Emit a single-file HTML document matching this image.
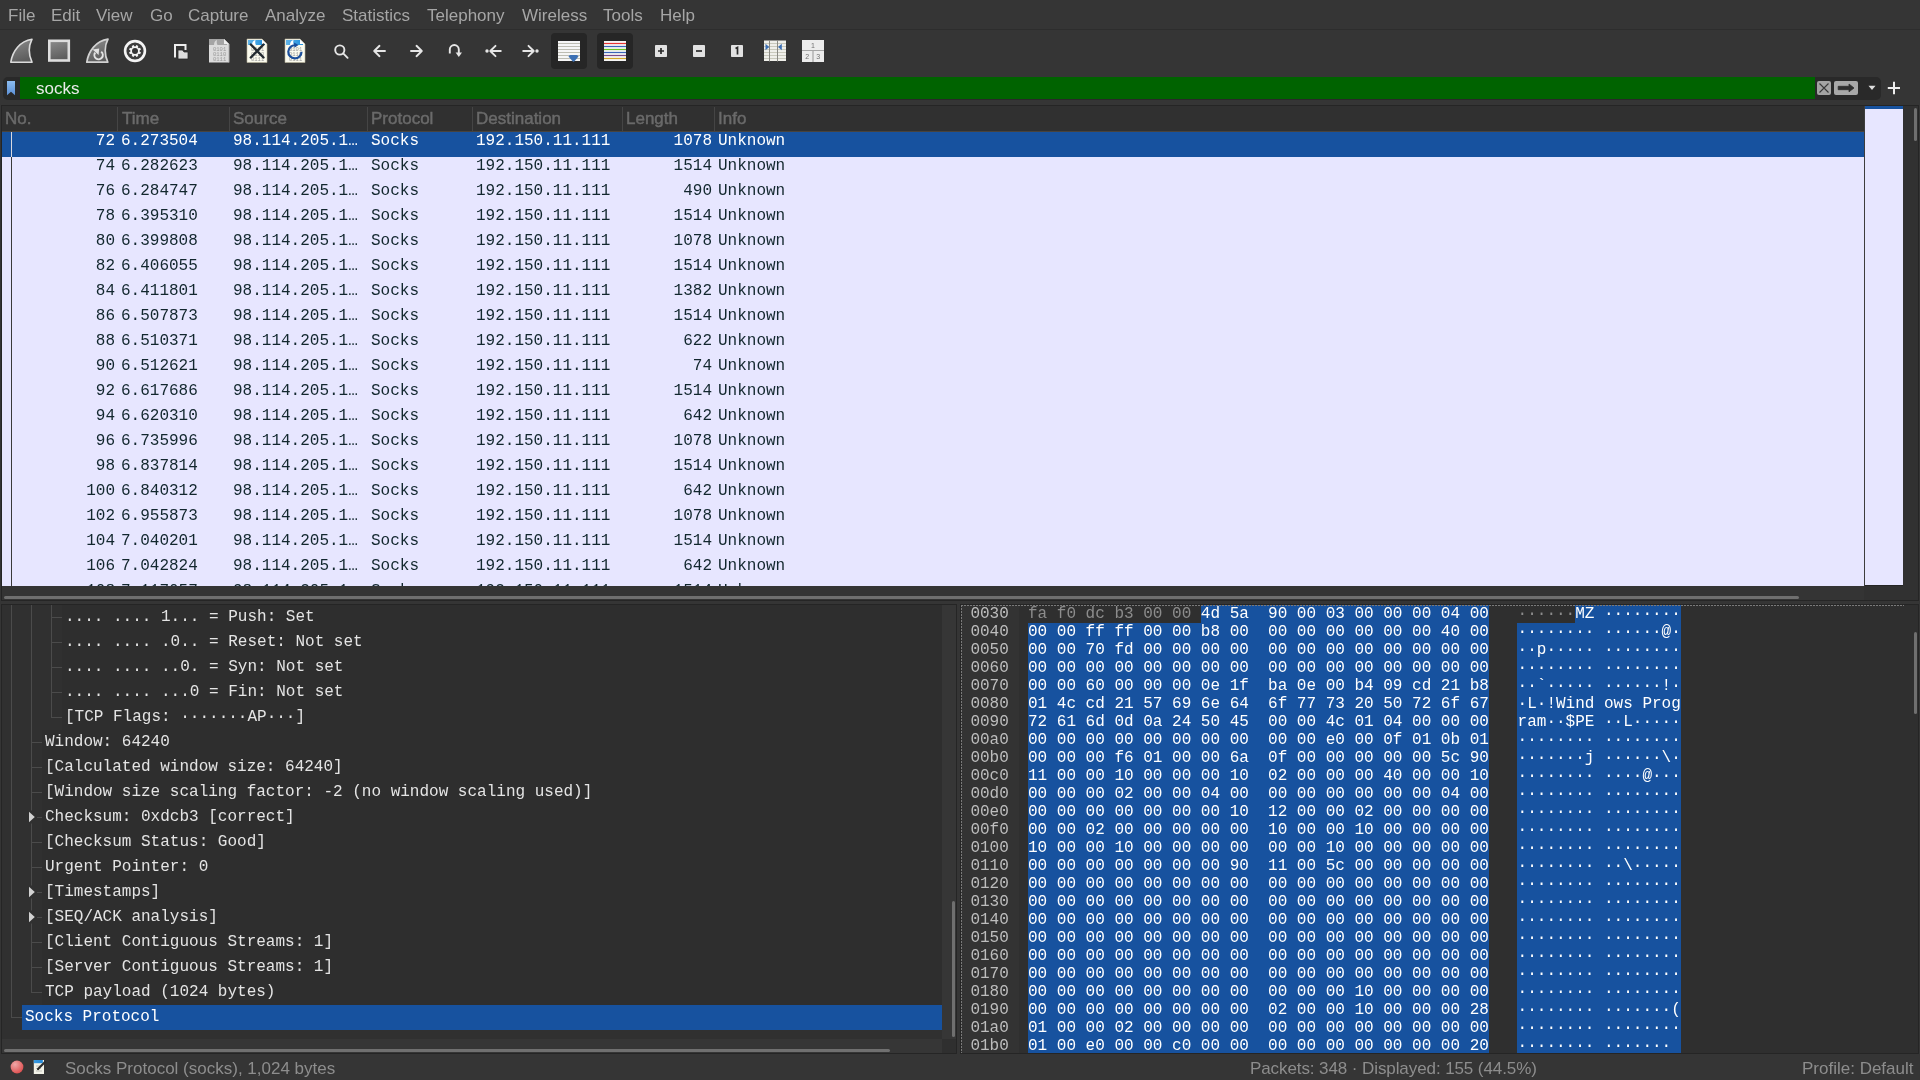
<!DOCTYPE html><html><head><meta charset="utf-8"><style>
*{margin:0;padding:0;box-sizing:border-box}
html,body{width:1920px;height:1080px;overflow:hidden;background:#353535;position:relative}
body{font-family:"Liberation Sans",sans-serif}
.ab{position:absolute}
.mono{font-family:"Liberation Mono",monospace;font-size:16px;white-space:pre}
.menu{position:absolute;top:5px;font-size:17px;color:#a6a6a6;line-height:22px}
.tb{position:absolute}
.hdr{position:absolute;top:106px;height:25px;font-size:17px;color:#6a6a6a;line-height:26px;white-space:nowrap;-webkit-text-stroke:0.45px #6a6a6a}
.hsep{position:absolute;top:107px;width:1px;height:24px;background:#454545}
.row{position:absolute;left:2px;width:1862px;height:25px;background:#e7e6ff;color:#12272e}
.row.sel{background:#17529f;color:#ffffff}
.c{position:absolute;top:-3px;line-height:25px;font-family:"Liberation Mono",monospace;font-size:16px;white-space:pre}
.dr{position:absolute;height:25px;line-height:25px;color:#dcdcdc;font-family:"Liberation Mono",monospace;font-size:16px;white-space:pre}
.hx{position:absolute;left:970px;height:18px;line-height:18px;font-family:"Liberation Mono",monospace;font-size:16px;white-space:pre;color:#bdbdbd}
.st{position:absolute;top:1057px;font-size:17px;color:#8d8d8d;line-height:24px;white-space:nowrap}
</style></head><body><div id="root" style="position:absolute;left:0;top:0;width:1920px;height:1080px;will-change:transform">
<div class="menu" style="left:8px">File</div>
<div class="menu" style="left:51px">Edit</div>
<div class="menu" style="left:96px">View</div>
<div class="menu" style="left:150px">Go</div>
<div class="menu" style="left:188px">Capture</div>
<div class="menu" style="left:265px">Analyze</div>
<div class="menu" style="left:342px">Statistics</div>
<div class="menu" style="left:427px">Telephony</div>
<div class="menu" style="left:522px">Wireless</div>
<div class="menu" style="left:603px">Tools</div>
<div class="menu" style="left:660px">Help</div>
<div class="ab" style="left:0;top:29px;width:1920px;height:1px;background:#2d2d2d"></div>
<svg class="ab" style="left:0;top:30px" width="840" height="45" viewBox="0 30 840 45">
<defs>
<linearGradient id="gfin" x1="0" y1="0" x2="0.3" y2="1"><stop offset="0" stop-color="#8c8c8c"/><stop offset="1" stop-color="#5e5e5e"/></linearGradient>
<linearGradient id="gblue" x1="0" y1="0" x2="1" y2="0"><stop offset="0" stop-color="#62b4e8"/><stop offset="1" stop-color="#1f8fdc"/></linearGradient>
</defs>
<!-- start fin -->
<path d="M10.8,62.2 C12.5,51 20,41 32,39.2 C28.6,46 28.6,55 32,62.2 Z" fill="url(#gfin)" stroke="#dcdcdc" stroke-width="1.6" stroke-linejoin="round"/>
<!-- stop -->
<rect x="49.3" y="40.8" width="19.5" height="19.7" fill="url(#gfin)" stroke="#dedede" stroke-width="2.6"/>
<!-- restart fin -->
<path d="M86.8,62.2 C88.5,51 96,41 108,39.2 C104.3,46 104.3,55 107.8,62.2 Z" fill="url(#gfin)" stroke="#d2d2d2" stroke-width="1.7" stroke-linejoin="round"/>
<path d="M101.2,51.8 A4.2,4.2 0 1 1 95.2,52.6" fill="none" stroke="#e2e2e2" stroke-width="2"/>
<path d="M92.6,49.4 L99.2,48.4 L98.6,55 Z" fill="#e2e2e2"/>
<!-- options gear -->
<circle cx="135" cy="51" r="8.6" fill="#3c3c3c"/>
<circle cx="135" cy="51" r="9.9" fill="none" stroke="#f4f4f4" stroke-width="2.6"/>
<g transform="translate(135,51) rotate(22.5)" fill="#f4f4f4">
<circle r="4.7"/>
<rect x="-1.1" y="-6" width="2.2" height="12"/>
<rect x="-1.1" y="-6" width="2.2" height="12" transform="rotate(45)"/>
<rect x="-1.1" y="-6" width="2.2" height="12" transform="rotate(90)"/>
<rect x="-1.1" y="-6" width="2.2" height="12" transform="rotate(135)"/>
</g>
<circle cx="135" cy="51" r="3" fill="#333333"/>
<!-- open -->
<path d="M175,57.5 V45 H185.5 V50" fill="none" stroke="#eeeeee" stroke-width="2"/>
<path d="M178,59 V50 H182.5 L184,52 H188 V59 Z" fill="#dedede" stroke="#2a2a2a" stroke-width="0.8"/>
<!-- doc grey -->
<path d="M209,39 H224 L229,44 V62.5 H209 Z" fill="#dcdcdc"/>
<path d="M209,39 H224 L227,42 V45 H209 Z" fill="#a5a5a5"/>
<path d="M214,45 C214,42 215.5,40.5 217,40 C216.5,42 216.7,44 217.5,45 Z" fill="#d8d8d8"/>
<path d="M224,39 L229,44 H224 Z" fill="#eeeeee"/>
<path d="M229,44 V62.5" stroke="#b0b0b0" stroke-width="1"/>
<g fill="#9a9a9a" font-family="Liberation Mono" font-size="5.5">
<text x="213" y="51">0101</text><text x="213" y="56">0110</text><text x="213" y="61">0111</text></g>
<!-- doc close -->
<path d="M247,39 H262 L267,44 V62.5 H247 Z" fill="#fbfbee" stroke="#b8b49a" stroke-width="0.6"/>
<path d="M248,40 H262 L265,43 V45 H248 Z" fill="url(#gblue)"/>
<path d="M252,45 C252,42 253.5,40.5 255.5,40 C255,42 255.2,44 256,45 Z" fill="#ffffff"/>
<path d="M262,39.5 L266.5,44 H262 Z" fill="#ffffff"/>
<g fill="#9a9a9a" font-family="Liberation Mono" font-size="5.5">
<text x="251" y="51">0101</text><text x="251" y="56">0110</text><text x="251" y="61">0111</text></g>
<path d="M250.8,44.5 L263.5,57.5 M263.5,44.5 L250.8,57.5" stroke="#232a30" stroke-width="2.4" stroke-linecap="round"/>
<!-- doc reload -->
<path d="M285,39 H300 L305,44 V62.5 H285 Z" fill="#fbfbee" stroke="#b8b49a" stroke-width="0.6"/>
<path d="M286,40 H300 L303,43 V45 H286 Z" fill="url(#gblue)"/>
<path d="M290,45 C290,42 291.5,40.5 293.5,40 C293,42 293.2,44 294,45 Z" fill="#ffffff"/>
<path d="M300,39.5 L304.5,44 H300 Z" fill="#ffffff"/>
<g fill="#9a9a9a" font-family="Liberation Mono" font-size="5.5">
<text x="289" y="51">0101</text><text x="289" y="56">0110</text><text x="289" y="61">0111</text></g>
<path d="M301.5,51.8 A6.6,6.6 0 1 1 295.5,45.3" fill="none" stroke="#1b4f9c" stroke-width="2.2"/>
<path d="M294,42.5 L298.5,45 L294.5,47.8 Z" fill="#1b4f9c"/>
<!-- search -->
<circle cx="339.8" cy="50" r="4.6" fill="none" stroke="#e6e6e6" stroke-width="1.9"/>
<path d="M343.2,53.4 L347.6,57.8" stroke="#e6e6e6" stroke-width="1.9" stroke-linecap="round"/>
<!-- back -->
<path d="M385,51 H374.5 M379.5,45.8 L374.2,51 L379.5,56.2" fill="none" stroke="#e6e6e6" stroke-width="1.9" stroke-linecap="round" stroke-linejoin="round"/>
<!-- forward -->
<path d="M411,51 H421.5 M416.5,45.8 L421.8,51 L416.5,56.2" fill="none" stroke="#e6e6e6" stroke-width="1.9" stroke-linecap="round" stroke-linejoin="round"/>
<!-- go to packet -->
<path d="M449.8,53.5 V49.5 A4.5,4.5 0 0 1 458.8,49.5 V55" fill="none" stroke="#e6e6e6" stroke-width="1.9"/>
<path d="M455.6,52.5 H462 L458.8,57 Z" fill="#e6e6e6"/>
<!-- first -->
<circle cx="487" cy="51" r="1.7" fill="#e6e6e6"/>
<path d="M500.8,51 H491 M495.5,45.8 L490.3,51 L495.5,56.2" fill="none" stroke="#e6e6e6" stroke-width="1.9" stroke-linecap="round" stroke-linejoin="round"/>
<!-- last -->
<circle cx="537" cy="51" r="1.7" fill="#e6e6e6"/>
<path d="M523.2,51 H533 M528.5,45.8 L533.7,51 L528.5,56.2" fill="none" stroke="#e6e6e6" stroke-width="1.9" stroke-linecap="round" stroke-linejoin="round"/>
<!-- autoscroll button -->
<rect x="551" y="33" width="36" height="36" rx="4" fill="#262626"/>
<rect x="558" y="41" width="22" height="20" fill="#f6f6f6"/>
<g stroke="#bdbdb3" stroke-width="1"><path d="M558,43.5H580M558,46.5H580M558,49.5H580M558,52.5H580M558,55.5H580M558,58.5H580"/></g>
<path d="M568.5,56.5 Q569,55 570.5,55 H576.5 Q578,55 578.5,56.5 L574.2,61.5 Q573.5,62.2 572.8,61.5 Z" fill="#3b6fb4"/>
<!-- colorize button -->
<rect x="597" y="33" width="36" height="36" rx="4" fill="#262626"/>
<rect x="604" y="41" width="22" height="20" fill="#f6f6f6"/>
<path d="M604,43.5H626" stroke="#e83535" stroke-width="1.2"/>
<path d="M604,46.5H626" stroke="#3966b8" stroke-width="1.2"/>
<path d="M604,49.5H626" stroke="#6ac322" stroke-width="1.2"/>
<path d="M604,52.5H626" stroke="#3966b8" stroke-width="1.2"/>
<path d="M604,55.5H626" stroke="#7a4a8a" stroke-width="1.2"/>
<path d="M604,58.5H626" stroke="#d2a628" stroke-width="1.2"/>
<!-- zoom in -->
<rect x="655" y="45" width="12" height="12" rx="0.8" fill="#e2e2e2"/>
<path d="M658,51H664M661,48V54" stroke="#2a2a2a" stroke-width="1.7"/>
<!-- zoom out -->
<rect x="693" y="45" width="12" height="12" rx="0.8" fill="#e2e2e2"/>
<path d="M696,51H702" stroke="#2a2a2a" stroke-width="1.7"/>
<!-- normal size -->
<rect x="731" y="45" width="12" height="12" rx="0.8" fill="#e2e2e2"/>
<path d="M735.5,48.5 L737.5,47.5 V54.5" fill="none" stroke="#2a2a2a" stroke-width="1.7"/>
<!-- resize columns -->
<rect x="764" y="40.5" width="22" height="20.5" fill="#efefea"/>
<g stroke="#c9c9bc" stroke-width="1"><path d="M764,43.5H786M764,46.5H786M764,49.5H786M764,52.5H786M764,55.5H786M764,58.5H786"/></g>
<path d="M769.5,40V61.5M777.5,40V61.5" stroke="#8a8a84" stroke-width="1"/>
<path d="M765.5,43.8 L769.3,47 L765.5,50.2 Z" fill="#3b6fb4"/>
<path d="M781.8,43.8 L778,47 L781.8,50.2 Z" fill="#3b6fb4"/>
<!-- layout -->
<rect x="802" y="40" width="22" height="22" fill="#ececec"/>
<path d="M802,50.5H824M813,50.5V62" stroke="#a5a5a5" stroke-width="1.2"/>
<g fill="#707070" font-family="Liberation Sans" font-size="7"><text x="811" y="47.5">1</text><text x="805.3" y="59.2">2</text><text x="816.3" y="59.2">3</text></g>
</svg>

<div class="ab" style="left:3px;top:77px;width:1878px;height:23px;background:#292929;border-radius:5px"></div>
<div class="ab" style="left:20px;top:77px;width:1795px;height:22px;background:#006300"></div>
<div class="ab" style="left:36px;top:77px;font-size:17px;line-height:23px;color:#eaeaea">socks</div>
<svg class="ab" style="left:0;top:74px" width="1920" height="30" viewBox="0 74 1920 30">
<defs><linearGradient id="gbm" x1="0" y1="0" x2="0" y2="1"><stop offset="0" stop-color="#8cbcf0"/><stop offset="1" stop-color="#5b90d6"/></linearGradient></defs>
<path d="M7,81 H15 V95.2 L11,91.8 L7,95.2 Z" fill="url(#gbm)"/>
<rect x="1817" y="81" width="14" height="14" rx="2" fill="#a3a3a3"/>
<path d="M1819.5,83.5 L1828.5,92.5 M1828.5,83.5 L1819.5,92.5" stroke="#383838" stroke-width="1.1"/>
<rect x="1834" y="81" width="24" height="14" rx="2" fill="#a8a8a8"/>
<path d="M1838.2,86.3 H1849 V84 L1854,88 L1849,91.8 V89.7 H1838.2 Z" fill="#2f2f2f" stroke="#2f2f2f" stroke-width="0.8" stroke-linejoin="round"/>
<path d="M1868.5,85.8 H1875.5 L1872,90 Z" fill="#dedede"/>
<path d="M1887.8,88 H1900 M1894,81.8 V94.2" stroke="#eeeeee" stroke-width="2"/>
</svg>

<div class="ab" style="left:1px;top:105px;width:1918px;height:496px;background:#252525"></div>
<div class="ab" style="left:2px;top:106px;width:1862px;height:25px;background:#303030"></div>
<div class="hdr" style="left:5px">No.</div>
<div class="hdr" style="left:122px">Time</div>
<div class="hdr" style="left:233px">Source</div>
<div class="hdr" style="left:371px">Protocol</div>
<div class="hdr" style="left:476px">Destination</div>
<div class="hdr" style="left:626px">Length</div>
<div class="hdr" style="left:718px">Info</div>
<div class="hsep" style="left:117px"></div>
<div class="hsep" style="left:229px"></div>
<div class="hsep" style="left:367px"></div>
<div class="hsep" style="left:472px"></div>
<div class="hsep" style="left:622px"></div>
<div class="hsep" style="left:714px"></div>
<div class="ab" style="left:2px;top:131px;width:1862px;height:1px;background:#48433d"></div>
<div class="ab" style="left:2px;top:132px;width:1862px;height:454px;background:#e7e6ff;overflow:hidden" id="pl">
<div class="row sel" style="left:0;top:0px">
<div class="c" style="right:1749px">72</div>
<div class="c" style="left:119px">6.273504</div>
<div class="c" style="left:231px">98.114.205.1…</div>
<div class="c" style="left:369px">Socks</div>
<div class="c" style="left:474px">192.150.11.111</div>
<div class="c" style="right:1152px">1078</div>
<div class="c" style="left:716px">Unknown</div>
</div>
<div class="row" style="left:0;top:25px">
<div class="c" style="right:1749px">74</div>
<div class="c" style="left:119px">6.282623</div>
<div class="c" style="left:231px">98.114.205.1…</div>
<div class="c" style="left:369px">Socks</div>
<div class="c" style="left:474px">192.150.11.111</div>
<div class="c" style="right:1152px">1514</div>
<div class="c" style="left:716px">Unknown</div>
</div>
<div class="row" style="left:0;top:50px">
<div class="c" style="right:1749px">76</div>
<div class="c" style="left:119px">6.284747</div>
<div class="c" style="left:231px">98.114.205.1…</div>
<div class="c" style="left:369px">Socks</div>
<div class="c" style="left:474px">192.150.11.111</div>
<div class="c" style="right:1152px">490</div>
<div class="c" style="left:716px">Unknown</div>
</div>
<div class="row" style="left:0;top:75px">
<div class="c" style="right:1749px">78</div>
<div class="c" style="left:119px">6.395310</div>
<div class="c" style="left:231px">98.114.205.1…</div>
<div class="c" style="left:369px">Socks</div>
<div class="c" style="left:474px">192.150.11.111</div>
<div class="c" style="right:1152px">1514</div>
<div class="c" style="left:716px">Unknown</div>
</div>
<div class="row" style="left:0;top:100px">
<div class="c" style="right:1749px">80</div>
<div class="c" style="left:119px">6.399808</div>
<div class="c" style="left:231px">98.114.205.1…</div>
<div class="c" style="left:369px">Socks</div>
<div class="c" style="left:474px">192.150.11.111</div>
<div class="c" style="right:1152px">1078</div>
<div class="c" style="left:716px">Unknown</div>
</div>
<div class="row" style="left:0;top:125px">
<div class="c" style="right:1749px">82</div>
<div class="c" style="left:119px">6.406055</div>
<div class="c" style="left:231px">98.114.205.1…</div>
<div class="c" style="left:369px">Socks</div>
<div class="c" style="left:474px">192.150.11.111</div>
<div class="c" style="right:1152px">1514</div>
<div class="c" style="left:716px">Unknown</div>
</div>
<div class="row" style="left:0;top:150px">
<div class="c" style="right:1749px">84</div>
<div class="c" style="left:119px">6.411801</div>
<div class="c" style="left:231px">98.114.205.1…</div>
<div class="c" style="left:369px">Socks</div>
<div class="c" style="left:474px">192.150.11.111</div>
<div class="c" style="right:1152px">1382</div>
<div class="c" style="left:716px">Unknown</div>
</div>
<div class="row" style="left:0;top:175px">
<div class="c" style="right:1749px">86</div>
<div class="c" style="left:119px">6.507873</div>
<div class="c" style="left:231px">98.114.205.1…</div>
<div class="c" style="left:369px">Socks</div>
<div class="c" style="left:474px">192.150.11.111</div>
<div class="c" style="right:1152px">1514</div>
<div class="c" style="left:716px">Unknown</div>
</div>
<div class="row" style="left:0;top:200px">
<div class="c" style="right:1749px">88</div>
<div class="c" style="left:119px">6.510371</div>
<div class="c" style="left:231px">98.114.205.1…</div>
<div class="c" style="left:369px">Socks</div>
<div class="c" style="left:474px">192.150.11.111</div>
<div class="c" style="right:1152px">622</div>
<div class="c" style="left:716px">Unknown</div>
</div>
<div class="row" style="left:0;top:225px">
<div class="c" style="right:1749px">90</div>
<div class="c" style="left:119px">6.512621</div>
<div class="c" style="left:231px">98.114.205.1…</div>
<div class="c" style="left:369px">Socks</div>
<div class="c" style="left:474px">192.150.11.111</div>
<div class="c" style="right:1152px">74</div>
<div class="c" style="left:716px">Unknown</div>
</div>
<div class="row" style="left:0;top:250px">
<div class="c" style="right:1749px">92</div>
<div class="c" style="left:119px">6.617686</div>
<div class="c" style="left:231px">98.114.205.1…</div>
<div class="c" style="left:369px">Socks</div>
<div class="c" style="left:474px">192.150.11.111</div>
<div class="c" style="right:1152px">1514</div>
<div class="c" style="left:716px">Unknown</div>
</div>
<div class="row" style="left:0;top:275px">
<div class="c" style="right:1749px">94</div>
<div class="c" style="left:119px">6.620310</div>
<div class="c" style="left:231px">98.114.205.1…</div>
<div class="c" style="left:369px">Socks</div>
<div class="c" style="left:474px">192.150.11.111</div>
<div class="c" style="right:1152px">642</div>
<div class="c" style="left:716px">Unknown</div>
</div>
<div class="row" style="left:0;top:300px">
<div class="c" style="right:1749px">96</div>
<div class="c" style="left:119px">6.735996</div>
<div class="c" style="left:231px">98.114.205.1…</div>
<div class="c" style="left:369px">Socks</div>
<div class="c" style="left:474px">192.150.11.111</div>
<div class="c" style="right:1152px">1078</div>
<div class="c" style="left:716px">Unknown</div>
</div>
<div class="row" style="left:0;top:325px">
<div class="c" style="right:1749px">98</div>
<div class="c" style="left:119px">6.837814</div>
<div class="c" style="left:231px">98.114.205.1…</div>
<div class="c" style="left:369px">Socks</div>
<div class="c" style="left:474px">192.150.11.111</div>
<div class="c" style="right:1152px">1514</div>
<div class="c" style="left:716px">Unknown</div>
</div>
<div class="row" style="left:0;top:350px">
<div class="c" style="right:1749px">100</div>
<div class="c" style="left:119px">6.840312</div>
<div class="c" style="left:231px">98.114.205.1…</div>
<div class="c" style="left:369px">Socks</div>
<div class="c" style="left:474px">192.150.11.111</div>
<div class="c" style="right:1152px">642</div>
<div class="c" style="left:716px">Unknown</div>
</div>
<div class="row" style="left:0;top:375px">
<div class="c" style="right:1749px">102</div>
<div class="c" style="left:119px">6.955873</div>
<div class="c" style="left:231px">98.114.205.1…</div>
<div class="c" style="left:369px">Socks</div>
<div class="c" style="left:474px">192.150.11.111</div>
<div class="c" style="right:1152px">1078</div>
<div class="c" style="left:716px">Unknown</div>
</div>
<div class="row" style="left:0;top:400px">
<div class="c" style="right:1749px">104</div>
<div class="c" style="left:119px">7.040201</div>
<div class="c" style="left:231px">98.114.205.1…</div>
<div class="c" style="left:369px">Socks</div>
<div class="c" style="left:474px">192.150.11.111</div>
<div class="c" style="right:1152px">1514</div>
<div class="c" style="left:716px">Unknown</div>
</div>
<div class="row" style="left:0;top:425px">
<div class="c" style="right:1749px">106</div>
<div class="c" style="left:119px">7.042824</div>
<div class="c" style="left:231px">98.114.205.1…</div>
<div class="c" style="left:369px">Socks</div>
<div class="c" style="left:474px">192.150.11.111</div>
<div class="c" style="right:1152px">642</div>
<div class="c" style="left:716px">Unknown</div>
</div>
<div class="row" style="left:0;top:450px">
<div class="c" style="right:1749px">108</div>
<div class="c" style="left:119px">7.117057</div>
<div class="c" style="left:231px">98.114.205.1…</div>
<div class="c" style="left:369px">Socks</div>
<div class="c" style="left:474px">192.150.11.111</div>
<div class="c" style="right:1152px">1514</div>
<div class="c" style="left:716px">Unknown</div>
</div>
<div class="ab" style="left:9px;top:0;width:1px;height:455px;background:#3a3a3a"></div>
<div class="ab" style="left:9px;top:0;width:1px;height:25px;background:#d8d8e0"></div>
</div>
<div class="ab" style="left:1864px;top:106px;width:1px;height:480px;background:#3d3d3d"></div>
<div class="ab" style="left:1865px;top:106px;width:38px;height:479px;background:#e7e6ff"></div>
<div class="ab" style="left:1865px;top:106px;width:38px;height:3px;background:#17529f"></div>
<div class="ab" style="left:1903px;top:106px;width:15px;height:494px;background:#313131"></div>
<div class="ab" style="left:1914px;top:108px;width:3px;height:33px;background:#6f6f6f;border-radius:2px"></div>
<div class="ab" style="left:2px;top:586px;width:1862px;height:14px;background:#343434"></div>
<div class="ab" style="left:1864px;top:586px;width:39px;height:14px;background:#313131"></div>
<div class="ab" style="left:4px;top:596px;width:1795px;height:3px;background:#6f6f6f;border-radius:2px"></div>
<div class="ab" style="left:1px;top:604px;width:956px;height:450px;background:#252525"></div>
<div class="ab" style="left:2px;top:605px;width:940px;height:434px;background:#303030;overflow:hidden">
<div class="ab" style="left:9px;top:0;width:1px;height:413px;background:#4b4b4b"></div>
<div class="ab" style="left:29px;top:0;width:1px;height:388px;background:#4b4b4b"></div>
<div class="ab" style="left:49px;top:0;width:1px;height:113px;background:#4b4b4b"></div>
<div class="ab" style="left:60px;top:0px;width:880px;height:25px;background:#2e2e2e"></div>
<div class="dr" style="left:63px;top:0px;color:#e4e4e4">.... .... 1... = Push: Set</div>
<div class="ab" style="left:49px;top:12px;width:11px;height:1px;background:#4b4b4b"></div>
<div class="ab" style="left:60px;top:25px;width:880px;height:25px;background:#2e2e2e"></div>
<div class="dr" style="left:63px;top:25px;color:#e4e4e4">.... .... .0.. = Reset: Not set</div>
<div class="ab" style="left:49px;top:37px;width:11px;height:1px;background:#4b4b4b"></div>
<div class="ab" style="left:60px;top:50px;width:880px;height:25px;background:#2e2e2e"></div>
<div class="dr" style="left:63px;top:50px;color:#e4e4e4">.... .... ..0. = Syn: Not set</div>
<div class="ab" style="left:49px;top:62px;width:11px;height:1px;background:#4b4b4b"></div>
<div class="ab" style="left:60px;top:75px;width:880px;height:25px;background:#2e2e2e"></div>
<div class="dr" style="left:63px;top:75px;color:#e4e4e4">.... .... ...0 = Fin: Not set</div>
<div class="ab" style="left:49px;top:87px;width:11px;height:1px;background:#4b4b4b"></div>
<div class="ab" style="left:60px;top:100px;width:880px;height:25px;background:#2e2e2e"></div>
<div class="dr" style="left:63px;top:100px;color:#e4e4e4">[TCP Flags: ·······AP···]</div>
<div class="ab" style="left:49px;top:112px;width:11px;height:1px;background:#4b4b4b"></div>
<div class="ab" style="left:40px;top:125px;width:900px;height:25px;background:#2e2e2e"></div>
<div class="dr" style="left:43px;top:125px;color:#e4e4e4">Window: 64240</div>
<div class="ab" style="left:29px;top:137px;width:11px;height:1px;background:#4b4b4b"></div>
<div class="ab" style="left:40px;top:150px;width:900px;height:25px;background:#2e2e2e"></div>
<div class="dr" style="left:43px;top:150px;color:#e4e4e4">[Calculated window size: 64240]</div>
<div class="ab" style="left:29px;top:162px;width:11px;height:1px;background:#4b4b4b"></div>
<div class="ab" style="left:40px;top:175px;width:900px;height:25px;background:#2e2e2e"></div>
<div class="dr" style="left:43px;top:175px;color:#e4e4e4">[Window size scaling factor: -2 (no window scaling used)]</div>
<div class="ab" style="left:29px;top:187px;width:11px;height:1px;background:#4b4b4b"></div>
<div class="ab" style="left:40px;top:200px;width:900px;height:25px;background:#2e2e2e"></div>
<div class="dr" style="left:43px;top:200px;color:#e4e4e4">Checksum: 0xdcb3 [correct]</div>
<svg class="ab" style="left:24px;top:205px" width="12" height="14"><rect x="2" y="0.5" width="8" height="13" fill="#303030"/><path d="M3,1.8 L8.8,7 L3,12.2 Z" fill="#d2d2d2"/></svg>
<div class="ab" style="left:35px;top:212px;width:5px;height:1px;background:#4b4b4b"></div>
<div class="ab" style="left:40px;top:225px;width:900px;height:25px;background:#2e2e2e"></div>
<div class="dr" style="left:43px;top:225px;color:#e4e4e4">[Checksum Status: Good]</div>
<div class="ab" style="left:29px;top:237px;width:11px;height:1px;background:#4b4b4b"></div>
<div class="ab" style="left:40px;top:250px;width:900px;height:25px;background:#2e2e2e"></div>
<div class="dr" style="left:43px;top:250px;color:#e4e4e4">Urgent Pointer: 0</div>
<div class="ab" style="left:29px;top:262px;width:11px;height:1px;background:#4b4b4b"></div>
<div class="ab" style="left:40px;top:275px;width:900px;height:25px;background:#2e2e2e"></div>
<div class="dr" style="left:43px;top:275px;color:#e4e4e4">[Timestamps]</div>
<svg class="ab" style="left:24px;top:280px" width="12" height="14"><rect x="2" y="0.5" width="8" height="13" fill="#303030"/><path d="M3,1.8 L8.8,7 L3,12.2 Z" fill="#d2d2d2"/></svg>
<div class="ab" style="left:35px;top:287px;width:5px;height:1px;background:#4b4b4b"></div>
<div class="ab" style="left:40px;top:300px;width:900px;height:25px;background:#2e2e2e"></div>
<div class="dr" style="left:43px;top:300px;color:#e4e4e4">[SEQ/ACK analysis]</div>
<svg class="ab" style="left:24px;top:305px" width="12" height="14"><rect x="2" y="0.5" width="8" height="13" fill="#303030"/><path d="M3,1.8 L8.8,7 L3,12.2 Z" fill="#d2d2d2"/></svg>
<div class="ab" style="left:35px;top:312px;width:5px;height:1px;background:#4b4b4b"></div>
<div class="ab" style="left:40px;top:325px;width:900px;height:25px;background:#2e2e2e"></div>
<div class="dr" style="left:43px;top:325px;color:#e4e4e4">[Client Contiguous Streams: 1]</div>
<div class="ab" style="left:29px;top:337px;width:11px;height:1px;background:#4b4b4b"></div>
<div class="ab" style="left:40px;top:350px;width:900px;height:25px;background:#2e2e2e"></div>
<div class="dr" style="left:43px;top:350px;color:#e4e4e4">[Server Contiguous Streams: 1]</div>
<div class="ab" style="left:29px;top:362px;width:11px;height:1px;background:#4b4b4b"></div>
<div class="ab" style="left:40px;top:375px;width:900px;height:25px;background:#2e2e2e"></div>
<div class="dr" style="left:43px;top:375px;color:#e4e4e4">TCP payload (1024 bytes)</div>
<div class="ab" style="left:29px;top:387px;width:11px;height:1px;background:#4b4b4b"></div>
<div class="ab" style="left:20px;top:400px;width:920px;height:25px;background:#17529f"></div>
<div class="dr" style="left:23px;top:400px;color:#ffffff">Socks Protocol</div>
<div class="ab" style="left:9px;top:412px;width:11px;height:1px;background:#4b4b4b"></div>
</div>
<div class="ab" style="left:942px;top:605px;width:14px;height:434px;background:#363636"></div>
<div class="ab" style="left:952px;top:901px;width:3px;height:136px;background:#6f6f6f;border-radius:2px"></div>
<div class="ab" style="left:2px;top:1039px;width:954px;height:14px;background:#363636"></div>
<div class="ab" style="left:942px;top:1039px;width:14px;height:14px;background:#2f2f2f"></div>
<div class="ab" style="left:4px;top:1049px;width:886px;height:3px;background:#707070;border-radius:2px"></div>
<div class="ab" style="left:960px;top:604px;width:959px;height:450px;background:#252525"></div>
<div class="ab" style="left:961px;top:605px;width:957px;height:448px;background:#2f2f2f;overflow:hidden">
<div class="ab" style="left:0;top:0;width:58px;height:448px;background:#333333"></div>
<div class="ab" style="left:239.8px;top:0px;width:288.0px;height:18px;background:#17529f"></div>
<div class="ab" style="left:614.2px;top:0px;width:105.6px;height:18px;background:#17529f"></div>
<div class="hx" style="left:9.4px;top:0px">0030</div>
<div class="hx" style="left:67px;top:0px"><span style="color:#8c8c8c">fa f0 dc b3 00 00 </span><span style="color:#fff">4d 5a  90 00 03 00 00 00 04 00</span></div>
<div class="hx" style="left:556.6px;top:0px"><span style="color:#8c8c8c">······</span><span style="color:#fff">MZ ········</span></div>
<div class="ab" style="left:67px;top:18px;width:460.8px;height:18px;background:#17529f"></div>
<div class="ab" style="left:555.8px;top:18px;width:164.0px;height:18px;background:#17529f"></div>
<div class="hx" style="left:9.4px;top:18px">0040</div>
<div class="hx" style="left:67px;top:18px;color:#fff">00 00 ff ff 00 00 b8 00  00 00 00 00 00 00 40 00</div>
<div class="hx" style="left:556.6px;top:18px;color:#fff">········ ······@·</div>
<div class="ab" style="left:67px;top:36px;width:460.8px;height:18px;background:#17529f"></div>
<div class="ab" style="left:555.8px;top:36px;width:164.0px;height:18px;background:#17529f"></div>
<div class="hx" style="left:9.4px;top:36px">0050</div>
<div class="hx" style="left:67px;top:36px;color:#fff">00 00 70 fd 00 00 00 00  00 00 00 00 00 00 00 00</div>
<div class="hx" style="left:556.6px;top:36px;color:#fff">··p····· ········</div>
<div class="ab" style="left:67px;top:54px;width:460.8px;height:18px;background:#17529f"></div>
<div class="ab" style="left:555.8px;top:54px;width:164.0px;height:18px;background:#17529f"></div>
<div class="hx" style="left:9.4px;top:54px">0060</div>
<div class="hx" style="left:67px;top:54px;color:#fff">00 00 00 00 00 00 00 00  00 00 00 00 00 00 00 00</div>
<div class="hx" style="left:556.6px;top:54px;color:#fff">········ ········</div>
<div class="ab" style="left:67px;top:72px;width:460.8px;height:18px;background:#17529f"></div>
<div class="ab" style="left:555.8px;top:72px;width:164.0px;height:18px;background:#17529f"></div>
<div class="hx" style="left:9.4px;top:72px">0070</div>
<div class="hx" style="left:67px;top:72px;color:#fff">00 00 60 00 00 00 0e 1f  ba 0e 00 b4 09 cd 21 b8</div>
<div class="hx" style="left:556.6px;top:72px;color:#fff">··`····· ······!·</div>
<div class="ab" style="left:67px;top:90px;width:460.8px;height:18px;background:#17529f"></div>
<div class="ab" style="left:555.8px;top:90px;width:164.0px;height:18px;background:#17529f"></div>
<div class="hx" style="left:9.4px;top:90px">0080</div>
<div class="hx" style="left:67px;top:90px;color:#fff">01 4c cd 21 57 69 6e 64  6f 77 73 20 50 72 6f 67</div>
<div class="hx" style="left:556.6px;top:90px;color:#fff">·L·!Wind ows Prog</div>
<div class="ab" style="left:67px;top:108px;width:460.8px;height:18px;background:#17529f"></div>
<div class="ab" style="left:555.8px;top:108px;width:164.0px;height:18px;background:#17529f"></div>
<div class="hx" style="left:9.4px;top:108px">0090</div>
<div class="hx" style="left:67px;top:108px;color:#fff">72 61 6d 0d 0a 24 50 45  00 00 4c 01 04 00 00 00</div>
<div class="hx" style="left:556.6px;top:108px;color:#fff">ram··$PE ··L·····</div>
<div class="ab" style="left:67px;top:126px;width:460.8px;height:18px;background:#17529f"></div>
<div class="ab" style="left:555.8px;top:126px;width:164.0px;height:18px;background:#17529f"></div>
<div class="hx" style="left:9.4px;top:126px">00a0</div>
<div class="hx" style="left:67px;top:126px;color:#fff">00 00 00 00 00 00 00 00  00 00 e0 00 0f 01 0b 01</div>
<div class="hx" style="left:556.6px;top:126px;color:#fff">········ ········</div>
<div class="ab" style="left:67px;top:144px;width:460.8px;height:18px;background:#17529f"></div>
<div class="ab" style="left:555.8px;top:144px;width:164.0px;height:18px;background:#17529f"></div>
<div class="hx" style="left:9.4px;top:144px">00b0</div>
<div class="hx" style="left:67px;top:144px;color:#fff">00 00 00 f6 01 00 00 6a  0f 00 00 00 00 00 5c 90</div>
<div class="hx" style="left:556.6px;top:144px;color:#fff">·······j ······\·</div>
<div class="ab" style="left:67px;top:162px;width:460.8px;height:18px;background:#17529f"></div>
<div class="ab" style="left:555.8px;top:162px;width:164.0px;height:18px;background:#17529f"></div>
<div class="hx" style="left:9.4px;top:162px">00c0</div>
<div class="hx" style="left:67px;top:162px;color:#fff">11 00 00 10 00 00 00 10  02 00 00 00 40 00 00 10</div>
<div class="hx" style="left:556.6px;top:162px;color:#fff">········ ····@···</div>
<div class="ab" style="left:67px;top:180px;width:460.8px;height:18px;background:#17529f"></div>
<div class="ab" style="left:555.8px;top:180px;width:164.0px;height:18px;background:#17529f"></div>
<div class="hx" style="left:9.4px;top:180px">00d0</div>
<div class="hx" style="left:67px;top:180px;color:#fff">00 00 00 02 00 00 04 00  00 00 00 00 00 00 04 00</div>
<div class="hx" style="left:556.6px;top:180px;color:#fff">········ ········</div>
<div class="ab" style="left:67px;top:198px;width:460.8px;height:18px;background:#17529f"></div>
<div class="ab" style="left:555.8px;top:198px;width:164.0px;height:18px;background:#17529f"></div>
<div class="hx" style="left:9.4px;top:198px">00e0</div>
<div class="hx" style="left:67px;top:198px;color:#fff">00 00 00 00 00 00 00 10  12 00 00 02 00 00 00 00</div>
<div class="hx" style="left:556.6px;top:198px;color:#fff">········ ········</div>
<div class="ab" style="left:67px;top:216px;width:460.8px;height:18px;background:#17529f"></div>
<div class="ab" style="left:555.8px;top:216px;width:164.0px;height:18px;background:#17529f"></div>
<div class="hx" style="left:9.4px;top:216px">00f0</div>
<div class="hx" style="left:67px;top:216px;color:#fff">00 00 02 00 00 00 00 00  10 00 00 10 00 00 00 00</div>
<div class="hx" style="left:556.6px;top:216px;color:#fff">········ ········</div>
<div class="ab" style="left:67px;top:234px;width:460.8px;height:18px;background:#17529f"></div>
<div class="ab" style="left:555.8px;top:234px;width:164.0px;height:18px;background:#17529f"></div>
<div class="hx" style="left:9.4px;top:234px">0100</div>
<div class="hx" style="left:67px;top:234px;color:#fff">10 00 00 10 00 00 00 00  00 00 10 00 00 00 00 00</div>
<div class="hx" style="left:556.6px;top:234px;color:#fff">········ ········</div>
<div class="ab" style="left:67px;top:252px;width:460.8px;height:18px;background:#17529f"></div>
<div class="ab" style="left:555.8px;top:252px;width:164.0px;height:18px;background:#17529f"></div>
<div class="hx" style="left:9.4px;top:252px">0110</div>
<div class="hx" style="left:67px;top:252px;color:#fff">00 00 00 00 00 00 00 90  11 00 5c 00 00 00 00 00</div>
<div class="hx" style="left:556.6px;top:252px;color:#fff">········ ··\·····</div>
<div class="ab" style="left:67px;top:270px;width:460.8px;height:18px;background:#17529f"></div>
<div class="ab" style="left:555.8px;top:270px;width:164.0px;height:18px;background:#17529f"></div>
<div class="hx" style="left:9.4px;top:270px">0120</div>
<div class="hx" style="left:67px;top:270px;color:#fff">00 00 00 00 00 00 00 00  00 00 00 00 00 00 00 00</div>
<div class="hx" style="left:556.6px;top:270px;color:#fff">········ ········</div>
<div class="ab" style="left:67px;top:288px;width:460.8px;height:18px;background:#17529f"></div>
<div class="ab" style="left:555.8px;top:288px;width:164.0px;height:18px;background:#17529f"></div>
<div class="hx" style="left:9.4px;top:288px">0130</div>
<div class="hx" style="left:67px;top:288px;color:#fff">00 00 00 00 00 00 00 00  00 00 00 00 00 00 00 00</div>
<div class="hx" style="left:556.6px;top:288px;color:#fff">········ ········</div>
<div class="ab" style="left:67px;top:306px;width:460.8px;height:18px;background:#17529f"></div>
<div class="ab" style="left:555.8px;top:306px;width:164.0px;height:18px;background:#17529f"></div>
<div class="hx" style="left:9.4px;top:306px">0140</div>
<div class="hx" style="left:67px;top:306px;color:#fff">00 00 00 00 00 00 00 00  00 00 00 00 00 00 00 00</div>
<div class="hx" style="left:556.6px;top:306px;color:#fff">········ ········</div>
<div class="ab" style="left:67px;top:324px;width:460.8px;height:18px;background:#17529f"></div>
<div class="ab" style="left:555.8px;top:324px;width:164.0px;height:18px;background:#17529f"></div>
<div class="hx" style="left:9.4px;top:324px">0150</div>
<div class="hx" style="left:67px;top:324px;color:#fff">00 00 00 00 00 00 00 00  00 00 00 00 00 00 00 00</div>
<div class="hx" style="left:556.6px;top:324px;color:#fff">········ ········</div>
<div class="ab" style="left:67px;top:342px;width:460.8px;height:18px;background:#17529f"></div>
<div class="ab" style="left:555.8px;top:342px;width:164.0px;height:18px;background:#17529f"></div>
<div class="hx" style="left:9.4px;top:342px">0160</div>
<div class="hx" style="left:67px;top:342px;color:#fff">00 00 00 00 00 00 00 00  00 00 00 00 00 00 00 00</div>
<div class="hx" style="left:556.6px;top:342px;color:#fff">········ ········</div>
<div class="ab" style="left:67px;top:360px;width:460.8px;height:18px;background:#17529f"></div>
<div class="ab" style="left:555.8px;top:360px;width:164.0px;height:18px;background:#17529f"></div>
<div class="hx" style="left:9.4px;top:360px">0170</div>
<div class="hx" style="left:67px;top:360px;color:#fff">00 00 00 00 00 00 00 00  00 00 00 00 00 00 00 00</div>
<div class="hx" style="left:556.6px;top:360px;color:#fff">········ ········</div>
<div class="ab" style="left:67px;top:378px;width:460.8px;height:18px;background:#17529f"></div>
<div class="ab" style="left:555.8px;top:378px;width:164.0px;height:18px;background:#17529f"></div>
<div class="hx" style="left:9.4px;top:378px">0180</div>
<div class="hx" style="left:67px;top:378px;color:#fff">00 00 00 00 00 00 00 00  00 00 00 10 00 00 00 00</div>
<div class="hx" style="left:556.6px;top:378px;color:#fff">········ ········</div>
<div class="ab" style="left:67px;top:396px;width:460.8px;height:18px;background:#17529f"></div>
<div class="ab" style="left:555.8px;top:396px;width:164.0px;height:18px;background:#17529f"></div>
<div class="hx" style="left:9.4px;top:396px">0190</div>
<div class="hx" style="left:67px;top:396px;color:#fff">00 00 00 00 00 00 00 00  02 00 00 10 00 00 00 28</div>
<div class="hx" style="left:556.6px;top:396px;color:#fff">········ ·······(</div>
<div class="ab" style="left:67px;top:414px;width:460.8px;height:18px;background:#17529f"></div>
<div class="ab" style="left:555.8px;top:414px;width:164.0px;height:18px;background:#17529f"></div>
<div class="hx" style="left:9.4px;top:414px">01a0</div>
<div class="hx" style="left:67px;top:414px;color:#fff">01 00 00 02 00 00 00 00  00 00 00 00 00 00 00 00</div>
<div class="hx" style="left:556.6px;top:414px;color:#fff">········ ········</div>
<div class="ab" style="left:67px;top:432px;width:460.8px;height:18px;background:#17529f"></div>
<div class="ab" style="left:555.8px;top:432px;width:164.0px;height:18px;background:#17529f"></div>
<div class="hx" style="left:9.4px;top:432px">01b0</div>
<div class="hx" style="left:67px;top:432px;color:#fff">01 00 e0 00 00 c0 00 00  00 00 00 00 00 00 00 20</div>
<div class="hx" style="left:556.6px;top:432px;color:#fff">········ ······· </div>
<div class="ab" style="left:0;top:0;width:943px;height:1px;background:repeating-linear-gradient(90deg,#7a7a7a 0 2px,transparent 2px 3px)"></div>
<div class="ab" style="left:0;top:0;width:1px;height:448px;background:repeating-linear-gradient(180deg,#7a7a7a 0 2px,transparent 2px 3px)"></div>
</div>
<div class="ab" style="left:1914px;top:632px;width:3px;height:82px;background:#6f6f6f;border-radius:2px"></div>
<svg class="ab" style="left:0;top:1054px" width="60" height="26" viewBox="0 1054 60 26">
<defs><radialGradient id="grd" cx="0.35" cy="0.3" r="0.8"><stop offset="0" stop-color="#f0a8a8"/><stop offset="1" stop-color="#dc4848"/></radialGradient>
<linearGradient id="gbl2" x1="0" y1="0" x2="1" y2="0"><stop offset="0" stop-color="#3d9be0"/><stop offset="1" stop-color="#1f86d6"/></linearGradient></defs>
<circle cx="17" cy="1067" r="6.4" fill="url(#grd)"/>
<rect x="33.8" y="1060" width="10.2" height="14" fill="#f2f2e8"/>
<rect x="33.8" y="1060" width="9" height="3.2" fill="url(#gbl2)"/>
<path d="M36,1066H42M36,1068.5H41M36,1071H42" stroke="#b0b0a8" stroke-width="0.7"/>
<path d="M37.5,1069.5 L45.5,1061.5" stroke="#2c2c2c" stroke-width="2.2"/>
<path d="M36.8,1070.3 L38,1068.6 L38.8,1069.4 Z" fill="#111"/>
</svg>

<div class="st" style="left:65px">Socks Protocol (socks), 1,024 bytes</div>
<div class="st" style="left:1250px;letter-spacing:-0.09px">Packets: 348 · Displayed: 155 (44.5%)</div>
<div class="st" style="left:1802px">Profile: Default</div>
</div></body></html>
